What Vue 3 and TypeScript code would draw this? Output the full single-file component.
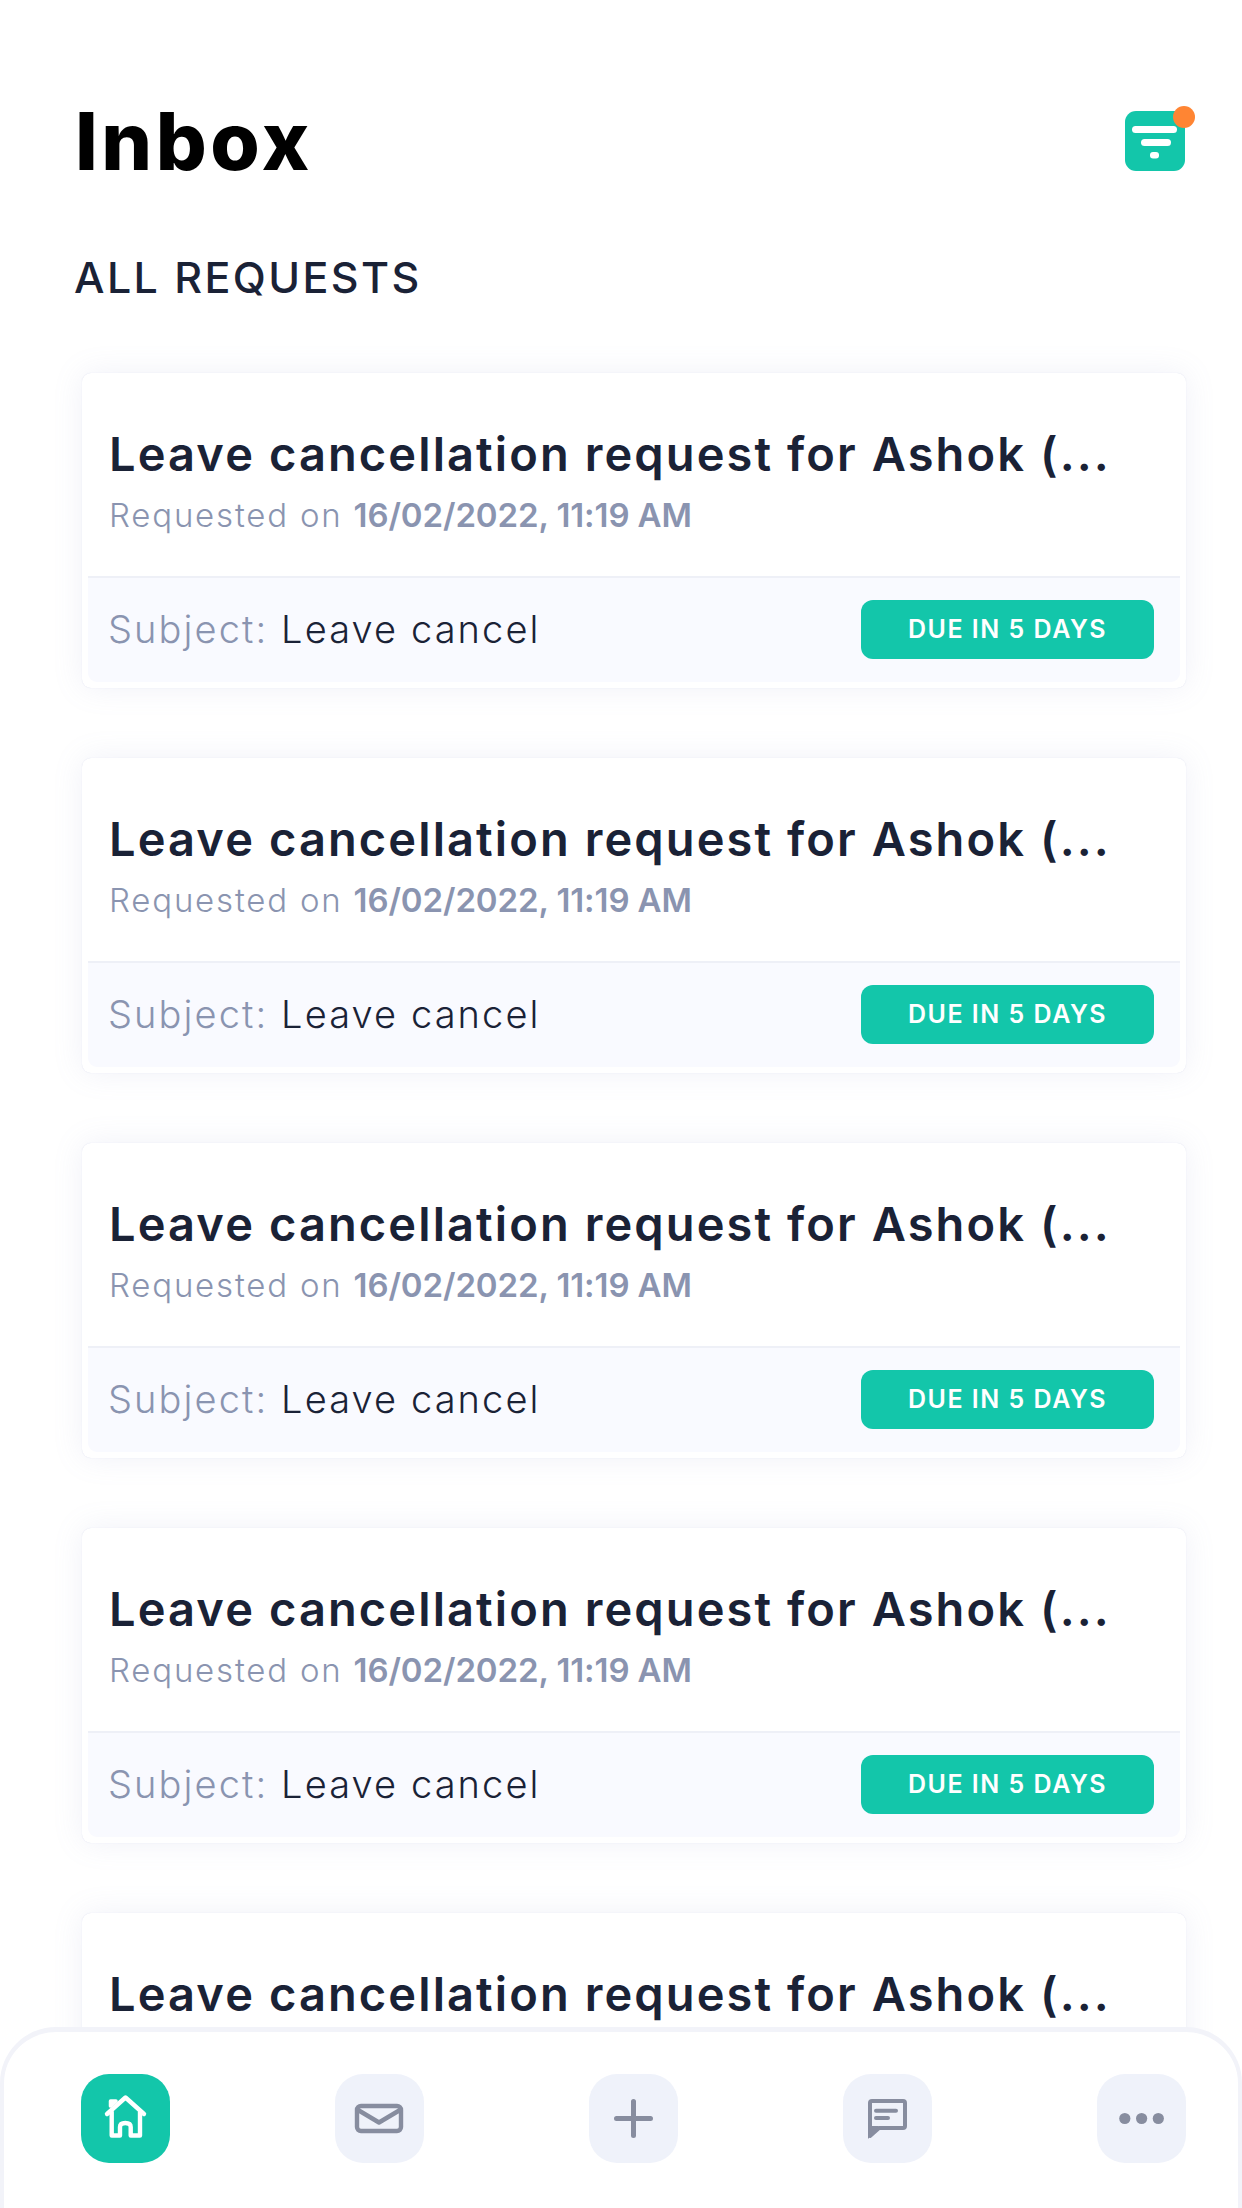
<script setup lang="ts">
const cards: number[] = [1, 2, 3, 4, 5]
</script>

<template>
  <div class="page">
    <header class="head">
      <h1 class="title">Inbox</h1>
      <div class="filter">
        <svg width="60" height="60" viewBox="0 0 60 60">
          <rect width="60" height="60" rx="11" fill="#13c6aa" />
          <rect x="7" y="15" width="45" height="7" rx="3.5" fill="#fff" />
          <rect x="16" y="28" width="30" height="7" rx="3.5" fill="#fff" />
          <rect x="25" y="41" width="9" height="6.5" rx="3" fill="#fff" />
        </svg>
        <span class="dot"></span>
      </div>
    </header>
    <h2 class="section">ALL REQUESTS</h2>
    <div class="list">
      <article v-for="c in cards" :key="c" class="card">
        <div class="top">
          <div class="name">Leave cancellation request for Ashok (...</div>
          <div class="when">Requested on <b>16/02/2022, 11:19 AM</b></div>
        </div>
        <div class="foot">
          <div class="subject"><span>Subject:</span> Leave cancel</div>
          <div class="badge">DUE IN 5 DAYS</div>
        </div>
      </article>
    </div>
    <nav class="bar">
      <button class="tab on">
        <svg width="89" height="89" viewBox="0 0 89 89" fill="none" stroke="#fff" stroke-width="4.400" stroke-linecap="round" stroke-linejoin="round">
          <path d="M26 40 L44.500 23.500 L63 40" />
          <path d="M30.700 38 V61.500 H39 V53 Q39 49 44.300 49 Q49.700 49 49.700 53 V61.500 H59 V38" />
          <path d="M29.500 32 V27 H35 Z" fill="#fff" stroke-width="3.500" />
        </svg>
      </button>
      <button class="tab">
        <svg width="89" height="89" viewBox="0 0 89 89" fill="none" stroke="#878d9f" stroke-width="4.400" stroke-linecap="round" stroke-linejoin="round">
          <rect x="22" y="32" width="44" height="25" rx="4" />
          <path d="M23 36 L44 48.500 L65 36" />
        </svg>
      </button>
      <button class="tab">
        <svg width="89" height="89" viewBox="0 0 89 89" fill="none" stroke="#878d9f" stroke-width="5" stroke-linecap="round">
          <path d="M44.500 27.500 V61.500 M27.500 44.500 H61.500" />
        </svg>
      </button>
      <button class="tab">
        <svg width="89" height="89" viewBox="0 0 89 89" fill="none">
          <path d="M29 27 H60 Q62 27 62 29 V52 Q62 54 60 54 H36 L27 62 V29 Q27 27 29 27 Z" stroke="#878d9f" stroke-width="4" stroke-linejoin="round" />
          <path d="M25 52 H36 L25 65 Z" fill="#878d9f" />
          <path d="M33 36.700 H53 M33 44 H45" stroke="#878d9f" stroke-width="4" stroke-linecap="round" />
        </svg>
      </button>
      <button class="tab">
        <svg width="89" height="89" viewBox="0 0 89 89" fill="#878d9f">
          <circle cx="27.800" cy="44.500" r="5.600" />
          <circle cx="44.600" cy="44.500" r="5.600" />
          <circle cx="61.300" cy="44.500" r="5.600" />
        </svg>
      </button>
    </nav>
  </div>
</template>

<style>
html, body { margin: 0; background: #fff; }
</style>

<style scoped>
.page {
  position: relative;
  width: 1242px;
  height: 2208px;
  overflow: hidden;
  background: #fff;
  font-family: Inter, "Liberation Sans", sans-serif;
  color: #1a2236;
  box-sizing: border-box;
  padding-top: 94px;
}
.head {
  display: flex;
  justify-content: space-between;
  align-items: center;
  padding: 0 57px 0 75px;
  height: 94px;
}
.title {
  margin: 0;
  font-size: 80px;
  font-weight: 800;
  color: #000;
  line-height: 94px;
  letter-spacing: 3.500px;
}
.filter { position: relative; width: 60px; height: 60px; }
.filter svg { display: block; }
.dot {
  position: absolute;
  top: -5px;
  right: -10px;
  width: 22px;
  height: 22px;
  border-radius: 50%;
  background: #ff8533;
}
.section {
  margin: 64px 0 0 74px;
  font-size: 43px;
  font-weight: 500;
  line-height: 50px;
  letter-spacing: 2.400px;
}
.list {
  display: flex;
  flex-direction: column;
  gap: 70px;
  margin: 71px 56px 0 82px;
}
.card {
  height: 315px;
  box-sizing: border-box;
  padding: 0 6px 6px;
  background: #fff;
  border-radius: 9px;
  box-shadow: 0 0 30px rgba(140, 150, 200, 0.13), 0 0 1px rgba(140, 150, 200, 0.3);
  display: flex;
  flex-direction: column;
}
.top { height: 203px; box-sizing: border-box; padding: 53px 0 0 21px; }
.name {
  font-size: 47px;
  font-weight: 600;
  line-height: 56px;
  white-space: nowrap;
  letter-spacing: 2.100px;
}
.when {
  margin-top: 13px;
  font-size: 33px;
  font-weight: 300;
  line-height: 40px;
  color: #8a94b0;
  white-space: nowrap;
  letter-spacing: 1.800px;
}
.when b { font-weight: 600; letter-spacing: -0.100px; }
.foot {
  flex: 1;
  display: flex;
  align-items: center;
  justify-content: space-between;
  background: #f9faff;
  border-top: 2px solid #eef0f7;
  border-radius: 0 0 9px 9px;
  padding: 0 26px 2px 20px;
}
.subject {
  font-size: 38px;
  font-weight: 300;
  white-space: nowrap;
  letter-spacing: 2.100px;
}
.subject span { color: #8a94b0; }
.badge {
  width: 293px;
  height: 59px;
  border-radius: 12px;
  background: #13c6aa;
  color: #fff;
  font-size: 25px;
  font-weight: 600;
  letter-spacing: 1.500px;
  display: flex;
  align-items: center;
  justify-content: center;
  white-space: nowrap;
}
.bar {
  position: absolute;
  left: 0;
  right: 0;
  bottom: 0;
  height: 181px;
  box-sizing: border-box;
  background: #fff;
  border: 4px solid #f2f3f9;
  border-top-width: 5px;
  border-bottom: 0;
  border-radius: 56px 56px 0 0;
  display: flex;
  justify-content: space-between;
  padding: 42px 52px 0 77px;
}
.tab {
  width: 89px;
  height: 89px;
  padding: 0;
  border: 0;
  border-radius: 28px;
  background: #eff2fa;
}
.tab svg { display: block; }
.tab.on { background: #13c6aa; }
</style>
